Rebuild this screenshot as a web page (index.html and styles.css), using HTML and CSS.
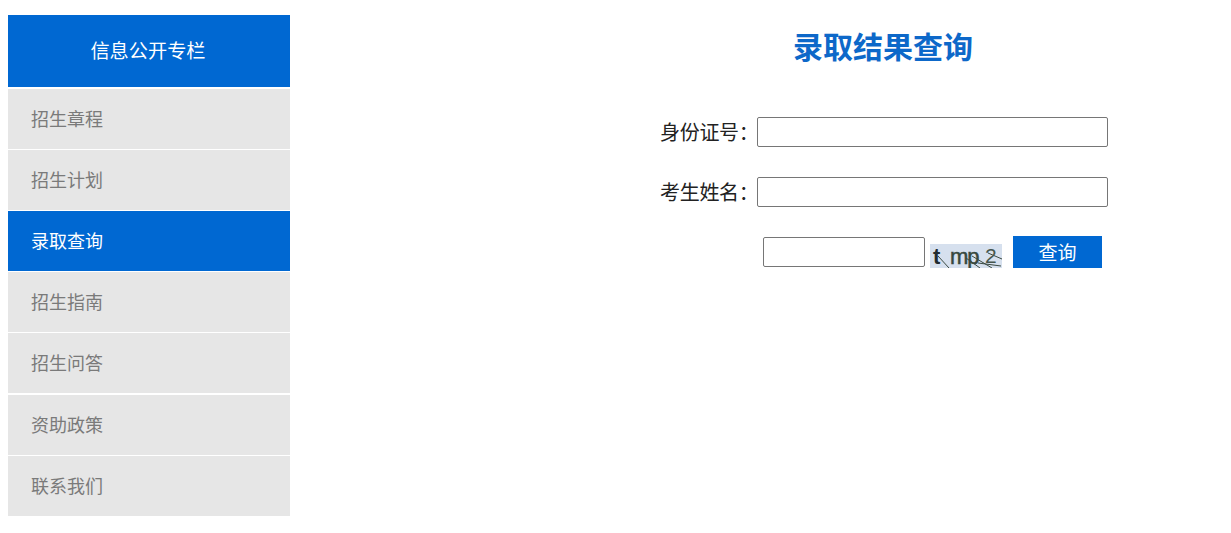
FILE: index.html
```html
<!DOCTYPE html>
<html lang="zh-CN">
<head>
<meta charset="utf-8">
<title>录取结果查询</title>
<link rel="stylesheet" href="styles.css">
</head>
<body>
<div class="page">
  <aside class="sidebar">
    <div class="side-head">信息公开专栏</div>
    <nav class="side-nav">
      <a class="side-item">招生章程</a>
      <a class="side-item">招生计划</a>
      <a class="side-item active">录取查询</a>
      <a class="side-item">招生指南</a>
      <a class="side-item">招生问答</a>
      <a class="side-item wide-gap">资助政策</a>
      <a class="side-item">联系我们</a>
    </nav>
  </aside>
  <main class="content">
    <h1 class="title">录取结果查询</h1>
    <form class="form">
      <div class="row"><label class="label">身份证号<span class="colon">：</span></label><input class="field" type="text"></div>
      <div class="row"><label class="label">考生姓名<span class="colon">：</span></label><input class="field" type="text"></div>
      <div class="row code-row">
        <input class="code" type="text">
        <svg class="captcha" width="72" height="24" viewBox="0 0 72 24">
          <rect width="72" height="24" fill="#d6e0ee"/>
          <g stroke="#3b4a42" stroke-width="1" fill="none">
            <path d="M8 12 L19 24"/>
            <path d="M36 14 L50 24"/>
            <path d="M42 12 L62 24"/>
            <path d="M58 9 L72 15"/>
            <path d="M48 19 L71 22"/>
          </g>
          <text class="cap-bold" x="3" y="20">t</text>
          <text class="cap-mid" x="20" y="20">mp</text>
          <text class="cap-thin" x="55" y="19">2</text>
        </svg>
        <button class="submit" type="button">查询</button>
      </div>
    </form>
  </main>
</div>
</body>
</html>
```
FILE: styles.css
```css
html, body { margin: 0; padding: 0; background: #fff; }
body { font-family: "Microsoft YaHei", "Noto Sans CJK SC", "Liberation Sans", sans-serif; }
.page { display: flex; padding: 15px 0 0 8px; align-items: flex-start; }
.sidebar { width: 282px; flex: none; }
.side-head { height: 72px; line-height: 70px; padding-right: 2px; box-sizing: border-box; background: #0068d2; color: #fff; font-size: 19.2px; text-align: center; }
.side-nav { display: flex; flex-direction: column; gap: 1px; padding-top: 2px; }
.side-item { display: block; height: 60px; line-height: 58px; padding-left: 23px; background: #e6e6e6; color: #7a7a7a; font-size: 18px; }
.side-item.active { background: #0068d2; color: #fff; }
.side-item.wide-gap { margin-top: 1px; }
.content { width: 640px; margin-left: 265px; }
.title { margin: 10px 0 0; padding-left: 16px; font-size: 30px; line-height: 40px; font-weight: 700; color: #0d68c9; text-align: center; }
.form { margin-top: 52px; display: flex; flex-direction: column; gap: 30px; padding-left: 105px; }
.row { display: flex; align-items: center; height: 30px; }
.label { width: 97px; font-size: 20px; line-height: 30px; letter-spacing: -0.3px; color: #222; white-space: nowrap; flex: none; }
.colon { font-feature-settings: "halt"; }
.field { box-sizing: border-box; width: 351px; height: 30px; border: 1px solid #767676; border-radius: 2px; padding: 0 2px; background: #fff; margin: 0; }
.code-row { padding-left: 103px; }
.code { box-sizing: border-box; width: 162px; height: 30px; border: 1px solid #767676; border-radius: 2px; padding: 0 2px; background: #fff; margin: 0; flex: none; }
.captcha { display: block; flex: none; margin: 7px 0 0 5px; }
.cap-bold { font-family: "Liberation Sans", sans-serif; font-size: 22px; font-weight: 700; fill: #222c30; }
.cap-mid { font-family: "Liberation Sans", sans-serif; font-size: 22px; letter-spacing: -1px; fill: #37483e; stroke: #37483e; stroke-width: 0.5px; }
.cap-thin { font-family: "Liberation Sans", sans-serif; font-size: 21px; fill: #46564d; }
.submit { width: 89px; height: 32px; margin: 0 0 0 11px; border: 0; background: #0068d2; color: #fff; font-family: inherit; font-size: 19px; line-height: 30px; padding: 0; flex: none; }
```
